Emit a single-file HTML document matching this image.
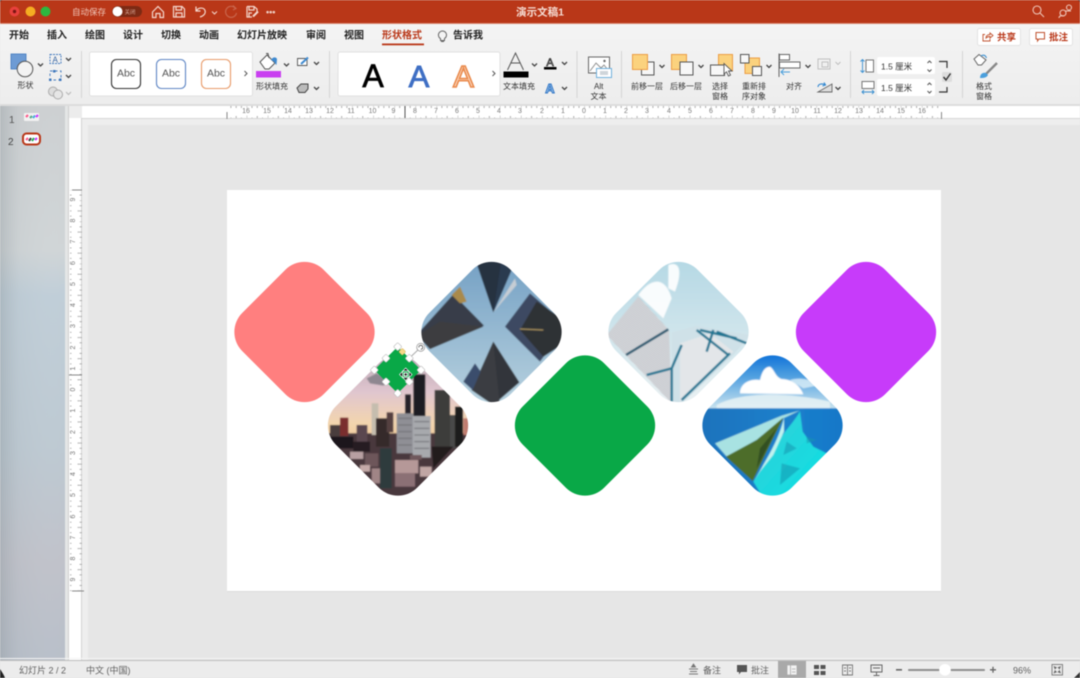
<!DOCTYPE html>
<html><head><meta charset="utf-8"><style>
html,body{margin:0;padding:0;background:#e6e6e6;width:1080px;height:678px;overflow:hidden}
svg{display:block;filter:blur(.45px)}
text{font-family:"Liberation Sans","Noto Sans CJK SC",sans-serif}
.tab{font-size:10px;fill:#222;font-weight:700}
.lb{font-size:8px;fill:#333}
.rl{font-size:7px;fill:#777}
.st{font-size:9px;fill:#606060}
.ch{fill:none;stroke:#444;stroke-width:1.3}
</style></head><body>
<svg width="1080" height="678" viewBox="0 0 1080 678" xmlns="http://www.w3.org/2000/svg">
<defs>
<filter id="sf" x="-5%" y="-5%" width="110%" height="110%"><feGaussianBlur stdDeviation="1.6"/></filter>
<linearGradient id="pan" x1="0" y1="0" x2="0" y2="1"><stop offset="0" stop-color="#cdd0d2"/><stop offset=".26" stop-color="#d0d5d7"/><stop offset=".34" stop-color="#c0ced8"/><stop offset=".62" stop-color="#bdc9d2"/><stop offset=".82" stop-color="#c0c2ca"/><stop offset="1" stop-color="#b8bfc9"/></linearGradient>
<linearGradient id="panL" x1="0" y1="0" x2="1" y2="0"><stop offset="0" stop-color="#7f8a90" stop-opacity=".32"/><stop offset=".3" stop-color="#9aa3a8" stop-opacity=".08"/><stop offset="1" stop-color="#fff" stop-opacity="0"/></linearGradient>
<linearGradient id="rib" x1="0" y1="0" x2="0" y2="1"><stop offset="0" stop-color="#f4f4f4"/><stop offset="1" stop-color="#ededed"/></linearGradient>
<linearGradient id="sky1" x1="0" y1="0" x2="0" y2="1"><stop offset="0" stop-color="#74a0c4"/><stop offset="1" stop-color="#b8d2df"/></linearGradient>
<linearGradient id="sky2" x1="0" y1="0" x2="0" y2="1"><stop offset="0" stop-color="#b9a6b4"/><stop offset=".45" stop-color="#e0c6cf"/><stop offset=".8" stop-color="#f3d5ae"/><stop offset="1" stop-color="#f0c99a"/></linearGradient>
<linearGradient id="sky3" x1="0" y1="0" x2="0" y2="1"><stop offset="0" stop-color="#b4d8e4"/><stop offset="1" stop-color="#eaf1f3"/></linearGradient>
<linearGradient id="sky4" x1="0" y1="0" x2="0" y2="1"><stop offset="0" stop-color="#0c70d8"/><stop offset=".4" stop-color="#4f9fe0"/><stop offset="1" stop-color="#cfe6ef"/></linearGradient>
<linearGradient id="sea" x1="0" y1="0" x2="1" y2="0"><stop offset="0" stop-color="#1a72bc"/><stop offset=".6" stop-color="#1c80cc"/><stop offset="1" stop-color="#1477c8"/></linearGradient>
<linearGradient id="lag" x1="0" y1="0" x2="1" y2="1"><stop offset="0" stop-color="#35cfd8"/><stop offset="1" stop-color="#0be0e4"/></linearGradient>
<pattern id="stripe" width="5" height="5" patternUnits="userSpaceOnUse" patternTransform="rotate(38)"><rect width="5" height="5" fill="#dfe1e4"/><rect width="5" height="2" fill="#b4b7bd"/></pattern>
<pattern id="hr" width="21.1" height="12" patternUnits="userSpaceOnUse" x="-6.5"><path d="M0 7.5V12M5.28 9.5V12M10.55 8V12M15.83 9.5V12" stroke="#999" stroke-width=".8" fill="none"/></pattern>
<pattern id="vr" width="12" height="21.1" patternUnits="userSpaceOnUse" y="10.5"><path d="M7.5 0H11.500M7.5 5.28H11.500M5.5 10.55H11.500M7.5 15.83H11.500" stroke="#999" stroke-width=".8" fill="none"/></pattern>
<clipPath id="cA"><rect x="-57.500" y="-57.500" width="115" height="115" rx="27" transform="translate(491.5 332) rotate(45)"/></clipPath>
<clipPath id="cB"><rect x="-57.500" y="-57.500" width="115" height="115" rx="27" transform="translate(398 425.5) rotate(45)"/></clipPath>
<clipPath id="cC"><rect x="-57.500" y="-57.500" width="115" height="115" rx="27" transform="translate(678.5 332) rotate(45)"/></clipPath>
<clipPath id="cD"><rect x="-57.500" y="-57.500" width="115" height="115" rx="27" transform="translate(772.5 425.5) rotate(45)"/></clipPath>
</defs>

<!-- base -->
<rect width="1080" height="678" fill="#e6e6e6"/>
<!-- title bar -->
<rect width="1080" height="24" fill="#b93718"/>
<rect y="23" width="1080" height="1" fill="#d88a73"/>
<path d="M0 0H3Q0 0 0 3ZM1080 0H1077Q1080 0 1080 3Z" fill="#33201c"/>
<circle cx="14.5" cy="11.5" r="5" fill="#e8413d"/><circle cx="14.5" cy="11.5" r="1.7" fill="#7a1512"/>
<circle cx="30.5" cy="11.5" r="5" fill="#f5ad22"/>
<circle cx="45.5" cy="11.5" r="5" fill="#2db83f"/>
<text x="72" y="15" font-size="8.5" fill="#efc4b6">自动保存</text>
<rect x="112" y="6" width="30" height="11" rx="5.5" fill="#7c2a14"/>
<circle cx="117.5" cy="11.5" r="5" fill="#fff"/>
<text x="124.5" y="14" font-size="5.5" fill="#d9a999">关闭</text>
<g fill="none" stroke="#f4d8ce" stroke-width="1.2">
<path d="M152.5 12L158 6.5L163.5 12V17.5H160V13.5H156V17.5H152.5Z"/>
<path d="M173.5 6.5H182L184.5 9V17H173.5ZM176 6.5V10H181.5V6.5M176 17V13H182V17"/>
<path d="M196 6.5V11H200.5M196.5 10.5C199 7 204 7.5 205 10.5C206 13.5 203.5 16 200 17"/>
<path d="M212 11.5L214.500 14L217 11.5" stroke-width="1"/>
<path d="M235.500 8.500A5.500 5.500 0 1 0 236.500 13" stroke="#c9664d"/><path d="M233 5.500L236 8.500L233 10" stroke="#c9664d"/>
<path d="M247 6.500H254L257 9V12M247 6.500V17H252M249 7V10H254V7M249 17V13H252"/>
<path d="M253 16.500L258 11.500" stroke-width="2"/>
</g>
<text x="266" y="15" font-size="9" fill="#f0cfc4" font-weight="700">•••</text>
<text x="540" y="15.500" font-size="10.500" fill="#f6ddd4" text-anchor="middle" font-weight="700">演示文稿1</text>
<g fill="none" stroke="#eec6b9" stroke-width="1.100">
<circle cx="1037" cy="10" r="4"/><path d="M1040 13L1044 17"/>
<circle cx="1063" cy="13" r="3"/><circle cx="1069" cy="7.500" r="2.500"/><path d="M1059 18C1059 15.500 1062 15.500 1064 16M1065 11H1071"/>
</g>

<!-- tab bar + ribbon -->
<rect y="24" width="1080" height="81" fill="url(#rib)"/>
<rect y="104" width="1080" height="2" fill="#dcdcdc"/>
<text class="tab" x="9" y="38.500">开始</text>
<text class="tab" x="47" y="38.500">插入</text>
<text class="tab" x="85" y="38.500">绘图</text>
<text class="tab" x="123" y="38.500">设计</text>
<text class="tab" x="161" y="38.500">切换</text>
<text class="tab" x="199" y="38.500">动画</text>
<text class="tab" x="237" y="38.500">幻灯片放映</text>
<text class="tab" x="306" y="38.500">审阅</text>
<text class="tab" x="344" y="38.500">视图</text>
<text class="tab" x="382" y="38.500" style="fill:#b93718">形状格式</text>
<rect x="382" y="43.500" width="42" height="1.800" fill="#b93718"/>
<path d="M441 31.500A4 4 0 0 1 445 38.500V40.500H441V38.500A4 4 0 0 1 441 31.500ZM441.500 41.500H444.500" transform="translate(-.5 0)" fill="none" stroke="#666" stroke-width="1"/>
<text class="tab" x="453" y="38.500">告诉我</text>
<!-- share/comment -->
<rect x="977.500" y="28.500" width="43" height="17" rx="2" fill="#fff" stroke="#e2e2e2"/>
<path d="M985 34.500H983V41H990V39M986 38C986 35.500 988 34.500 990 34.500V33L993 35.500L990 38V36.500C988.500 36.500 987 37 986 38Z" fill="none" stroke="#c0522f" stroke-width=".9"/>
<text x="997" y="40.500" font-size="9.500" fill="#b93718" font-weight="700">共享</text>
<rect x="1029.500" y="28.500" width="43" height="17" rx="2" fill="#fff" stroke="#e2e2e2"/>
<path d="M1036 32.500H1044.500V39H1039L1037.500 41V39H1036Z" fill="none" stroke="#c0522f" stroke-width="1"/>
<text x="1049" y="40.500" font-size="9.500" fill="#b93718" font-weight="700">批注</text>
<!-- separators -->
<g fill="#d4d4d4"><rect x="81" y="51" width="1" height="47"/><rect x="329" y="51" width="1" height="47"/><rect x="576.500" y="51" width="1" height="47"/><rect x="621" y="51" width="1" height="47"/><rect x="850" y="51" width="1" height="47"/><rect x="962" y="51" width="1" height="47"/></g>

<!-- shape group -->
<rect x="11" y="54" width="15" height="15" fill="#6d9bd4" stroke="#3f78bd" stroke-width=".8"/>
<circle cx="25" cy="69" r="7.800" fill="#f3f3f3" stroke="#555" stroke-width="1"/>
<text class="lb" x="17.500" y="88">形状</text>
<path class="ch" d="M38 63.500L40.500 66L43 63.500M66 58L68.500 60.500L71 58M66 75L68.500 77.500L71 75"/>
<rect x="50" y="54.500" width="11" height="9" fill="none" stroke="#3f78bd" stroke-width=".9" stroke-dasharray="2 1"/>
<text x="52.500" y="62.500" font-size="8" fill="#2f5f9e">A</text>
<path d="M50 71H61V80H50Z" fill="none" stroke="#3f78bd" stroke-width=".9" stroke-dasharray="2.500 2.500"/>
<g fill="#3f78bd"><rect x="49" y="78.500" width="2.500" height="2.500"/><rect x="59" y="78.500" width="2.500" height="2.500"/><rect x="53" y="70" width="2.500" height="2.500"/></g>
<circle cx="53" cy="91.500" r="4.500" fill="#ddd" stroke="#aaa"/><circle cx="58" cy="94.500" r="4.500" fill="#e6e6e6" stroke="#aaa"/>
<path d="M66 92L68.500 94.500L71 92" fill="none" stroke="#bbb" stroke-width="1.200"/>

<!-- style gallery -->
<rect x="89.500" y="52" width="163" height="44" rx="2" fill="#fff" stroke="#e0e0e0"/>
<rect x="111.500" y="59.500" width="29" height="29" rx="5" fill="#fff" stroke="#333" stroke-width="1.100"/>
<text x="126" y="76.500" font-size="10.500" fill="#555" text-anchor="middle">Abc</text>
<rect x="156.500" y="59.500" width="29" height="29" rx="5" fill="#fff" stroke="#5f86c4" stroke-width="1.100"/>
<text x="171" y="76.500" font-size="10.500" fill="#555" text-anchor="middle">Abc</text>
<rect x="201.500" y="59.500" width="29" height="29" rx="5" fill="#fff" stroke="#e89a68" stroke-width="1.100"/>
<text x="216" y="76.500" font-size="10.500" fill="#555" text-anchor="middle">Abc</text>
<path d="M244.500 71L247 73.500L244.500 76" fill="none" stroke="#555" stroke-width="1"/>
<!-- fill -->
<path d="M260 62L267 55L275 63L269 69H265Z" fill="#fff" stroke="#555" stroke-width="1"/>
<path d="M266 53.500L268 53.500L269 58" fill="none" stroke="#555" stroke-width="1"/>
<path d="M271 60C273 56.500 276 57 277 59L276.500 65C275 64 275 62 273 61Z" fill="#3f8ad0"/>
<rect x="256" y="71" width="25" height="6.500" fill="#c93ff0"/>
<text class="lb" x="256" y="89">形状填充</text>
<path class="ch" d="M284 63.500L286.500 66L289 63.500M314 62L316.500 64.500L319 62M314 87L316.500 89.500L319 87"/>
<path d="M297.500 58.500H307V65.500H297.500Z" fill="#fff" stroke="#555" stroke-width=".9"/><path d="M301 64L308 57.500" stroke="#3f8ad0" stroke-width="2"/>
<path d="M297 88L301 84H308V89L305 92.500H299Z" fill="#bbb" stroke="#444" stroke-width="1"/>

<!-- wordart gallery -->
<rect x="338" y="52" width="162" height="44" rx="2" fill="#fff" stroke="#e0e0e0"/>
<text x="373" y="87" font-size="32" fill="#000" stroke="#000" stroke-width=".7" text-anchor="middle">A</text>
<text x="419" y="87" font-size="31" fill="#3f6fc4" stroke="#3f6fc4" stroke-width=".9" text-anchor="middle">A</text>
<text x="463.500" y="87" font-size="31" fill="#fbd9c2" stroke="#ea8a4c" stroke-width="1.600" text-anchor="middle">A</text>
<path d="M492.500 71L495 73.500L492.500 76" fill="none" stroke="#555" stroke-width="1"/>
<path d="M507.500 70L515.500 53L523.500 70M511 63H520" fill="none" stroke="#555" stroke-width="1"/>
<rect x="503.500" y="71.500" width="25" height="6" fill="#000"/>
<text class="lb" x="503" y="89">文本填充</text>
<path class="ch" d="M532 63.500L534.500 66L537 63.500M562 62L564.500 64.500L567 62M562 87L564.500 89.500L567 87"/>
<text x="550" y="66" font-size="11" fill="#bbb" stroke="#333" stroke-width=".7" text-anchor="middle">A</text>
<rect x="544" y="67" width="12.500" height="2.500" fill="#000"/>
<text x="550" y="93" font-size="13" fill="#a9cdf0" stroke="#2f74c4" stroke-width="1" text-anchor="middle" font-weight="700">A</text>

<!-- alt -->
<rect x="588.500" y="57" width="21" height="16" fill="#fff" stroke="#666"/>
<path d="M590 71L596 63L601 68L604 65L608 70" fill="none" stroke="#888" stroke-width=".9"/><circle cx="604.500" cy="61" r="1.200" fill="#666"/>
<rect x="596.500" y="68.500" width="15" height="9" fill="#fff" stroke="#6fb0dc" stroke-width="1"/><rect x="600" y="71" width="8" height="4" fill="#cfd5da"/>
<text class="lb" x="594" y="89">Alt</text>
<text class="lb" x="590.500" y="99">文本</text>

<!-- arrange -->
<rect x="641.500" y="62" width="12.500" height="13" fill="#f7f7f7" stroke="#555"/>
<rect x="632.500" y="54.500" width="15" height="15" fill="#fbd27e" stroke="#ec9d44" stroke-width="1"/>
<text class="lb" x="631" y="89">前移一层</text>
<rect x="671.500" y="54.500" width="15" height="15" fill="#fbd27e" stroke="#ec9d44" stroke-width="1"/>
<rect x="680" y="62" width="13" height="13" fill="#f7f7f7" stroke="#555"/>
<text class="lb" x="670" y="89">后移一层</text>
<path class="ch" d="M659.500 65L662 67.500L664.500 65M698.500 65L701 67.500L703.500 65M766.500 65L769 67.500L771.500 65M805.500 65L808 67.500L810.500 65M835.500 87L838 89.500L840.500 87"/>
<rect x="718.500" y="54.500" width="14" height="16" fill="#fbd27e" stroke="#ec9d44" stroke-width="1"/>
<rect x="710.500" y="65" width="14" height="10.500" fill="#f7f7f7" stroke="#555"/>
<path d="M724 63.500L724 74L726.500 71.800L728.500 76L730.500 75L728.500 71H732Z" fill="#fff" stroke="#555" stroke-width=".9"/>
<text class="lb" x="712" y="89">选择</text><text class="lb" x="712" y="99">窗格</text>
<rect x="745" y="58" width="14.500" height="15.500" fill="#fbd27e" stroke="#ec9d44" stroke-width="1"/>
<rect x="740.500" y="54.500" width="8.500" height="8.500" fill="#f7f7f7" stroke="#555"/>
<rect x="752.500" y="66.500" width="9" height="9" fill="#f7f7f7" stroke="#555"/>
<text class="lb" x="742" y="89">重新排</text><text class="lb" x="742" y="99">序对象</text>
<path d="M779 53.500V77" stroke="#666" stroke-width="1"/>
<rect x="779.500" y="54.500" width="10" height="5.500" fill="#fff" stroke="#666"/>
<rect x="779.500" y="62" width="20.500" height="6" fill="#fff" stroke="#666"/>
<path d="M790 72H781M784 69L781 72L784 75" fill="none" stroke="#4a9fdc" stroke-width="1"/>
<text class="lb" x="786" y="89">对齐</text>
<g fill="none" stroke="#bbb" stroke-width=".9"><rect x="818" y="59" width="12" height="10"/><rect x="822" y="62" width="6" height="5"/><path d="M835.500 62L838 64.500L840.500 62"/></g>
<path d="M818 92L832 84V92Z" fill="#ddd" stroke="#666" stroke-width=".9"/>
<path d="M818 87C818 84 822 83 825 85M824 82.500L825.500 85L822.500 86" fill="none" stroke="#2f86d0" stroke-width="1.100"/>

<!-- size -->
<rect x="866" y="60" width="7.500" height="12" fill="#fff" stroke="#777"/>
<path d="M862.500 59.500V72.500M860.500 61.500L862.500 59.500L864.500 61.500M860.500 70.500L862.500 72.500L864.500 70.500" fill="none" stroke="#3a8fd0" stroke-width=".9"/>
<rect x="862" y="81.500" width="12" height="7" fill="#fff" stroke="#777"/>
<path d="M862 92H874M864 90L862 92L864 94M872 90L874 92L872 94" fill="none" stroke="#3a8fd0" stroke-width=".9"/>
<rect x="877" y="57" width="58" height="17" rx="2" fill="#fff"/>
<rect x="877" y="79" width="58" height="17" rx="2" fill="#fff"/>
<text x="881" y="69.500" font-size="8.500" fill="#333">1.5 厘米</text>
<text x="881" y="91" font-size="8.500" fill="#333">1.5 厘米</text>
<path d="M927.500 63L929.500 61L931.500 63M927.500 69.500L929.500 71.500L931.500 69.500M927.500 85L929.500 83L931.500 85M927.500 91L929.500 93L931.500 91" fill="none" stroke="#555" stroke-width="1"/>
<path d="M939 61.500H947V68M939 92H947V87" fill="none" stroke="#333" stroke-width="1.200"/>
<rect x="942" y="72" width="10" height="10" rx="1.500" fill="#ddd"/>
<path d="M943.500 77L946 80L950.500 73.500" fill="none" stroke="#333" stroke-width="1.400"/>
<!-- format pane -->
<path d="M974 59L979 54.500L986 60L981.500 65H978Z" fill="#fff" stroke="#666"/>
<path d="M981 56C984 54 986 56 986.500 58" fill="none" stroke="#3a8fd0" stroke-width="1.100"/>
<path d="M997 63L986 74" stroke="#888" stroke-width="2.400"/>
<path d="M980 78C980 74 983 72 986 73L988 75C986.500 78 983 78 980 78Z" fill="#4a9fdc"/>
<text class="lb" x="976" y="89">格式</text><text class="lb" x="976" y="99">窗格</text>

<!-- left panel -->
<rect y="106" width="65" height="554" fill="url(#pan)"/>
<rect y="106" width="65" height="554" fill="url(#panL)"/>
<rect x="65" y="106" width="3" height="554" fill="#e4e6e6"/>
<rect x="68" y="106" width="1" height="554" fill="#cfcfcf"/>
<text x="9" y="123" font-size="10" fill="#555">1</text>
<text x="8" y="145" font-size="10" fill="#444">2</text>
<rect x="24" y="113" width="15" height="8" rx="1" fill="#f2f2f2"/>
<rect x="23" y="133.500" width="17" height="11" rx="3.500" fill="#fff" stroke="#b93718" stroke-width="2"/>
<g stroke-width="2"><path d="M26 117L28 115" stroke="#f58"/><path d="M30 118L32 116" stroke="#5a8"/><path d="M33 118L35 115.500" stroke="#4ad"/><path d="M36 117L38 115" stroke="#c3f"/>
<path d="M26 140L28 138" stroke="#f58"/><path d="M29 141L31 138" stroke="#333"/><path d="M32 141L34 138" stroke="#2a5"/><path d="M35 140L37 138" stroke="#c3f"/></g>

<!-- rulers -->
<rect x="69" y="106" width="13" height="12" fill="#ececec"/>
<rect x="69" y="118" width="13" height="542" fill="#fff"/>
<rect x="81" y="118" width="1" height="542" fill="#d4d4d4"/>
<rect x="82" y="106" width="998" height="12" fill="#fff"/>
<rect x="82" y="118" width="998" height="1" fill="#d6d6d6"/>
<rect x="82" y="119" width="998" height="6" fill="#eeeeee"/>
<rect x="82" y="119" width="6" height="541" fill="#eeeeee"/>
<rect x="227" y="106" width="714" height="12" fill="url(#hr)"/>
<rect x="226.500" y="112" width="1" height="7" fill="#888"/><rect x="941" y="112" width="1" height="7" fill="#888"/>
<rect x="404.500" y="106" width="1" height="12" fill="#555"/>
<g text-anchor="middle">
<text class="rl" x="246" y="113">16</text><text class="rl" x="267" y="113">15</text><text class="rl" x="288" y="113">14</text><text class="rl" x="309" y="113">13</text><text class="rl" x="330" y="113">12</text><text class="rl" x="351" y="113">11</text><text class="rl" x="372.500" y="113">10</text><text class="rl" x="393.500" y="113">9</text><text class="rl" x="415" y="113">8</text><text class="rl" x="436" y="113">7</text><text class="rl" x="457" y="113">6</text><text class="rl" x="478" y="113">5</text><text class="rl" x="499" y="113">4</text><text class="rl" x="520" y="113">3</text><text class="rl" x="542" y="113">2</text><text class="rl" x="563" y="113">1</text><text class="rl" x="584" y="113">0</text><text class="rl" x="605" y="113">1</text><text class="rl" x="626" y="113">2</text><text class="rl" x="647" y="113">3</text><text class="rl" x="669" y="113">4</text><text class="rl" x="690" y="113">5</text><text class="rl" x="711" y="113">6</text><text class="rl" x="732" y="113">7</text><text class="rl" x="753" y="113">8</text><text class="rl" x="774" y="113">9</text><text class="rl" x="795" y="113">10</text><text class="rl" x="817" y="113">11</text><text class="rl" x="838" y="113">12</text><text class="rl" x="859" y="113">13</text><text class="rl" x="880" y="113">14</text><text class="rl" x="901" y="113">15</text><text class="rl" x="922" y="113">16</text>
</g>
<rect x="70" y="190" width="12" height="401" fill="url(#vr)"/>
<rect x="72" y="189.500" width="10" height="1" fill="#888"/><rect x="72" y="590.500" width="12" height="1" fill="#888"/>
<rect x="69" y="374.500" width="13" height="1" fill="#888"/>
<g text-anchor="middle">
<text class="rl" transform="translate(75 199.500) rotate(-90)">9</text><text class="rl" transform="translate(75 220.500) rotate(-90)">8</text><text class="rl" transform="translate(75 241.500) rotate(-90)">7</text><text class="rl" transform="translate(75 263) rotate(-90)">6</text><text class="rl" transform="translate(75 284) rotate(-90)">5</text><text class="rl" transform="translate(75 305) rotate(-90)">4</text><text class="rl" transform="translate(75 326) rotate(-90)">3</text><text class="rl" transform="translate(75 347.500) rotate(-90)">2</text><text class="rl" transform="translate(75 368.500) rotate(-90)">1</text><text class="rl" transform="translate(75 389.500) rotate(-90)">0</text><text class="rl" transform="translate(75 410.500) rotate(-90)">1</text><text class="rl" transform="translate(75 432) rotate(-90)">2</text><text class="rl" transform="translate(75 453) rotate(-90)">3</text><text class="rl" transform="translate(75 474) rotate(-90)">4</text><text class="rl" transform="translate(75 495) rotate(-90)">5</text><text class="rl" transform="translate(75 516.500) rotate(-90)">6</text><text class="rl" transform="translate(75 537.500) rotate(-90)">7</text><text class="rl" transform="translate(75 558.500) rotate(-90)">8</text><text class="rl" transform="translate(75 579.500) rotate(-90)">9</text>
</g>

<!-- slide -->
<rect x="227" y="190" width="714" height="401" fill="#dcdcdc" transform="translate(0 1)"/>
<rect x="227" y="190" width="714" height="401" fill="#fff"/>
<rect x="-57.500" y="-57.500" width="115" height="115" rx="27" transform="translate(304.500 332) rotate(45)" fill="#ff7f7f"/>
<rect x="-57.500" y="-57.500" width="115" height="115" rx="27" transform="translate(585 425.500) rotate(45)" fill="#09a847"/>
<rect x="-57.500" y="-57.500" width="115" height="115" rx="27" transform="translate(866 332) rotate(45)" fill="#c73bfa"/>

<!-- photo: skyscrapers -->
<g clip-path="url(#cA)"><g transform="translate(320 255) scale(.33333)" filter="url(#sf)">
<rect x="290" y="10" width="450" height="440" fill="url(#sky1)"/>
<path d="M465 10H590L520 172Z" fill="#2a3a50"/><path d="M465 10H545L520 172Z" fill="#26303f"/>
<path d="M520 172L585 70L590 90Z" fill="#c6cdd4"/>
<path d="M290 240L400 118L492 212L330 282Z" fill="#383c48"/><path d="M395 120L420 95L440 140L420 145Z" fill="#a98a4c"/>
<path d="M360 200L490 215L330 282L295 240Z" fill="#3d3d40"/>
<path d="M555 215L630 115L740 210L660 320Z" fill="#3c4a62"/><path d="M650 140L740 200V260L670 305L600 225Z" fill="#2f3034"/>
<path d="M600 222L670 225" stroke="#a9925f" stroke-width="4"/>
<path d="M520 260L598 382L520 450L455 405Z" fill="#33343a"/><path d="M520 260L540 450H520L455 405Z" fill="#3a3c42"/>
<path d="M430 380L465 325L482 350L458 405Z" fill="#3b4e6c"/>
</g></g>

<!-- photo: city -->
<g clip-path="url(#cB)"><g transform="translate(320 255) scale(.33333)" filter="url(#sf)">
<rect x="10" y="290" width="450" height="270" fill="url(#sky2)"/>
<path d="M140 370L170 355L210 378L190 392L150 385Z" fill="#8e8790"/>
<rect x="10" y="535" width="450" height="200" fill="#4a383e"/>
<rect x="30" y="510" width="30" height="40" fill="#4a3d3c"/><rect x="60" y="488" width="25" height="55" fill="#7a2d2f"/><rect x="110" y="510" width="32" height="55" fill="#5a4750"/>
<rect x="155" y="445" width="20" height="95" fill="#c5bdae"/><rect x="168" y="490" width="40" height="85" fill="#35292a"/><rect x="200" y="472" width="20" height="60" fill="#55403f"/>
<rect x="255" y="418" width="18" height="60" fill="#28242a"/>
<rect x="280" y="358" width="36" height="130" fill="#1f1c22"/>
<rect x="230" y="475" width="50" height="120" fill="#8f8f95"/><rect x="278" y="483" width="54" height="125" fill="#a7a9ad"/>
<path d="M235 490H275M235 510H275M235 530H275M235 550H275M235 570H275M283 500H328M283 520H328M283 540H328M283 560H328M283 580H328" stroke="#6f6f75" stroke-width="3"/>
<rect x="344" y="405" width="46" height="170" fill="#3c3e3b"/><rect x="390" y="480" width="18" height="100" fill="#4a4a48"/><rect x="405" y="455" width="24" height="120" fill="#1b1a1a"/>
<rect x="430" y="490" width="20" height="50" fill="#c07b70"/>
<rect x="30" y="545" width="70" height="35" fill="#1e181b"/><rect x="100" y="560" width="50" height="30" fill="#251d21"/>
<rect x="90" y="590" width="40" height="22" fill="#b8a0a2"/><rect x="135" y="595" width="40" height="40" fill="#6d565a"/><rect x="120" y="630" width="30" height="20" fill="#c4aaa8"/><rect x="155" y="640" width="30" height="45" fill="#a08586"/>
<rect x="180" y="580" width="35" height="120" fill="#2f3b3c"/>
<rect x="225" y="615" width="70" height="40" fill="#b59898"/><rect x="225" y="655" width="60" height="40" fill="#8b7074"/><rect x="300" y="635" width="35" height="30" fill="#c0a6a4"/>
<path d="M335 575L400 575L340 640Z" fill="#231c1e"/><rect x="270" y="600" width="35" height="14" fill="#70585c"/>
</g></g>

<!-- photo: glass -->
<g clip-path="url(#cC)"><g transform="translate(600 255) scale(.33333)" filter="url(#sf)">
<rect x="20" y="10" width="440" height="440" fill="url(#sky3)"/>
<path d="M205 30C245 15 245 60 225 110L205 100ZM115 120C150 70 195 60 215 130L190 190Z" fill="#fff" opacity=".9"/>
<path d="M115 125L207 225L215 445L20 240Z" fill="url(#stripe)"/>
<path d="M78 300L205 223" stroke="#25566e" stroke-width="7"/>
<path d="M215 232L290 212L450 240L400 300L240 450L215 445Z" fill="#cfe1e8"/>
<path d="M240 265L330 235L400 290L240 440Z" fill="#e3e6e9"/>
<path d="M140 360L215 340L245 270M215 340L215 440M245 435L390 295M290 225L385 300M340 225L320 290M300 225L410 250M350 230L440 265" fill="none" stroke="#1f7390" stroke-width="7"/>
</g></g>

<!-- photo: beach -->
<g clip-path="url(#cD)"><g transform="translate(600 255) scale(.33333)" filter="url(#sf)">
<rect x="300" y="295" width="440" height="170" fill="url(#sky4)"/>
<path d="M420 415C420 385 450 370 480 375C485 350 495 335 510 335C525 345 525 365 545 372C575 372 600 390 610 418Z" fill="#fff"/>
<path d="M570 375C600 365 640 375 660 390L610 400Z" fill="#dff0f8" opacity=".8"/>
<path d="M350 450C420 410 560 410 690 440V465H350Z" fill="#e8f2f5" opacity=".85"/>
<rect x="300" y="460" width="440" height="270" fill="url(#sea)"/>
<path d="M600 466L545 482L345 565L380 605L470 555L550 490Z" fill="#a8e2e2"/>
<path d="M600 468C585 500 540 540 510 600L460 680L490 730H660L690 600L640 575L608 530Z" fill="url(#lag)"/>
<path d="M552 488C535 560 500 610 462 678L480 650L520 600L552 530Z" fill="#c0f3ef"/>
<path d="M378 605L470 555L550 488L500 590L458 678Z" fill="#4d6d2c"/>
<path d="M480 580L530 520L470 640Z" fill="#335022"/>
<path d="M545 625L600 640L540 690ZM620 545L650 555L620 565ZM560 560L590 580L550 600Z" fill="#1596ae" opacity=".55"/>
</g></g>

<!-- selected shape -->
<rect x="-16.500" y="-16.500" width="33" height="33" rx="4" transform="translate(397.700 370) rotate(45)" fill="#09a847"/>
<path d="M409.500 358L420.500 347.500" stroke="#aaa" stroke-width="1"/>
<circle cx="420.700" cy="347.300" r="4" fill="#fff" stroke="#999" stroke-width=".8"/>
<path d="M418.800 347.500A2 2 0 1 1 420.800 349.300" fill="none" stroke="#555" stroke-width=".8"/>
<g fill="#fff" stroke="#bbb" stroke-width=".6">
<rect x="-3" y="-3" width="6" height="6" rx="1.200" transform="translate(397.700 346.700) rotate(45)"/>
<rect x="-3" y="-3" width="6" height="6" rx="1.200" transform="translate(374.300 370) rotate(45)"/>
<rect x="-3" y="-3" width="6" height="6" rx="1.200" transform="translate(421 370) rotate(45)"/>
<rect x="-3" y="-3" width="6" height="6" rx="1.200" transform="translate(397.700 393.300) rotate(45)"/>
<rect x="-3" y="-3" width="6" height="6" rx="1.200" transform="translate(386 358.300) rotate(45)"/>
<rect x="-3" y="-3" width="6" height="6" rx="1.200" transform="translate(409.300 358.300) rotate(45)"/>
<rect x="-3" y="-3" width="6" height="6" rx="1.200" transform="translate(386 381.700) rotate(45)"/>
<rect x="-3" y="-3" width="6" height="6" rx="1.200" transform="translate(409.300 381.700) rotate(45)"/>
</g>
<rect x="-2.500" y="-2.500" width="5" height="5" rx="1" transform="translate(402.300 351.800) rotate(45)" fill="#f6d98a" stroke="#d9b24e" stroke-width=".5"/>
<path d="M405.700 368L408.700 371H402.700ZM405.700 380.500L408.700 377.500H402.700ZM399.500 374.500L402.500 371.500V377.500ZM412 374.500L409 371.500V377.500Z" fill="#111" stroke="#fff" stroke-width=".7"/>
<rect x="403.700" y="372.500" width="4" height="4" fill="#fff"/><circle cx="405.700" cy="374.500" r="1.200" fill="#222"/>

<!-- status bar -->
<rect y="660" width="1080" height="1" fill="#bdbdbd"/>
<rect y="658" width="1080" height="1" fill="#f4f4f4"/>
<rect y="661" width="1080" height="17" fill="#ececec"/>
<path d="M0 669C2 672 4 675 5 678H0Z" fill="#222"/>
<path d="M1080 672L1074 678H1080Z" fill="#333"/>
<text class="st" x="19" y="673.500">幻灯片 2 / 2</text>
<text class="st" x="86" y="673.500">中文 (中国)</text>
<path d="M689 669H698M690 671.500H697M689 674H698M693.500 664L691.500 667H695.500Z" stroke="#777" stroke-width=".9" fill="#777"/>
<text class="st" x="703" y="673.500">备注</text>
<path d="M737 665H747V672H741L739 674.500V672H737Z" fill="#555"/>
<text class="st" x="751" y="673.500">批注</text>
<rect x="778" y="661" width="28" height="17" fill="#a9a9a9"/>
<path d="M787 665H797V675H787ZM790.500 665V675M792 669H795.500M792 672H795.500" fill="#f2f2f2" stroke="#a9a9a9" stroke-width=".8"/>
<g fill="#555"><rect x="814" y="665" width="5" height="4"/><rect x="820.500" y="665" width="5" height="4"/><rect x="814" y="671" width="5" height="4"/><rect x="820.500" y="671" width="5" height="4"/></g>
<path d="M842.500 665H852.500V675H842.500ZM847.500 665V675M844 668H846M844 671H846M849 668H851M849 671H851" fill="none" stroke="#777" stroke-width=".9"/>
<path d="M871 665H882V672H871ZM876.500 672V675M873.500 675.500H879.500M873 668H880" fill="none" stroke="#666" stroke-width="1"/>
<rect x="896" y="669" width="6" height="1.600" fill="#666"/>
<rect x="908" y="669" width="77" height="2" rx="1" fill="#8e8e8e"/>
<circle cx="945" cy="669.800" r="5.800" fill="#fff"/>
<path d="M990 669.800H996M993 666.800V672.800" stroke="#666" stroke-width="1.300"/>
<text class="st" x="1013" y="673.500">96%</text>
<rect x="1052" y="664.500" width="10.500" height="10.500" fill="none" stroke="#777" stroke-width=".9"/>
<path d="M1054 666.500L1056.500 667.500L1055 669ZM1060.500 666.500L1058 667.500L1059.500 669ZM1054 673L1056.500 672L1055 670.500ZM1060.500 673L1058 672L1059.500 670.500Z" fill="#666" stroke="#666" stroke-width=".6"/>
</svg>
</body></html>
